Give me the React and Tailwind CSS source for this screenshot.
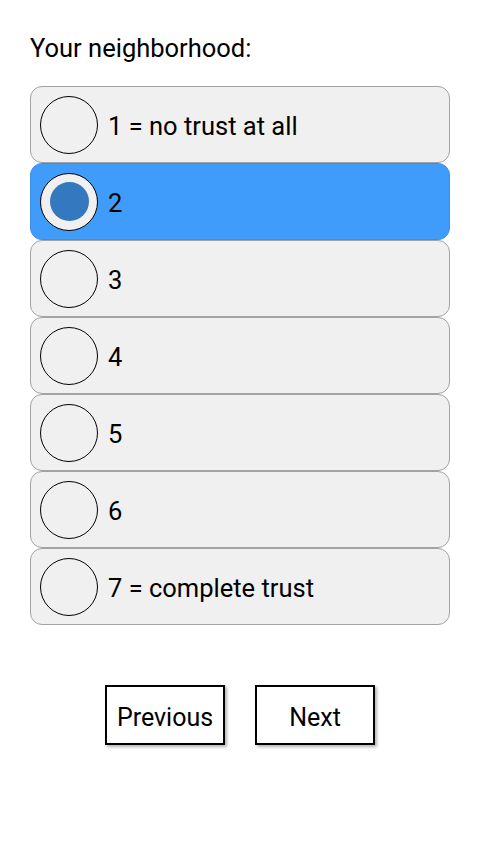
import React, { useState } from "react";

const options = ["1 = no trust at all", "2", "3", "4", "5", "6", "7 = complete trust"];

const App = () => {
    const [selected, setSelected] = useState(1);

    return (
        <div className="w-[480px] h-[852px] bg-white px-[30px] pt-[32px] font-['Roboto',sans-serif] text-black">
            <div className="text-[25.5px] leading-[33px] mb-[21px]">Your neighborhood:</div>

            <div className="flex flex-col">
                {options.map((label, i) => (
                    <button
                        key={label}
                        type="button"
                        onClick={() => setSelected(i)}
                        className={
                            i === selected
                                ? "flex items-center h-[77px] px-[9px] rounded-[12px] border border-[#3d8fe6] bg-[#409cfb] text-left"
                                : "flex items-center h-[77px] px-[9px] rounded-[12px] border border-[#a3a3a3] bg-[#f0f0f0] text-left"
                        }
                    >
                        <span className="flex items-center justify-center w-[58px] h-[58px] rounded-full border-[1.5px] border-black bg-[#f0f0f0] shrink-0">
                            {i === selected && <span className="w-[39px] h-[39px] rounded-full bg-[#3478c0]" />}
                        </span>
                        <span className="ml-[10px] text-[25.5px] leading-[30px] pt-[2px]">{label}</span>
                    </button>
                ))}
            </div>

            <div className="flex justify-center gap-[30px] mt-[60px]">
                <button type="button" className="w-[120px] h-[60px] border-2 border-black bg-white text-[25px] pt-[5px] shadow-[2px_2px_3px_rgba(0,0,0,0.3)]">
                    Previous
                </button>
                <button type="button" className="w-[120px] h-[60px] border-2 border-black bg-white text-[25px] pt-[5px] shadow-[2px_2px_3px_rgba(0,0,0,0.3)]">
                    Next
                </button>
            </div>
        </div>
    );
};

export default App;
